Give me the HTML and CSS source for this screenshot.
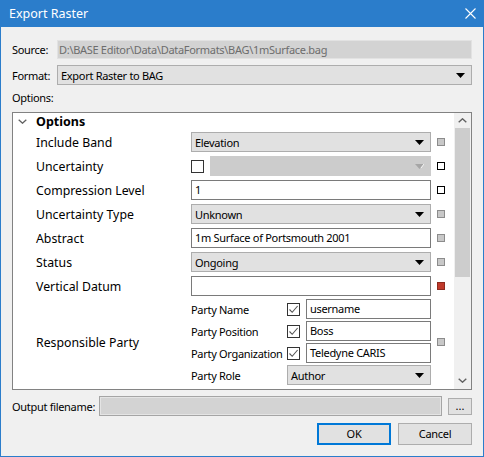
FILE: index.html
```html
<!DOCTYPE html>
<html>
<head>
<meta charset="utf-8">
<link rel="stylesheet" href="styles.css">
</head>
<body>
<div class="window">
  <div class="titlebar">
    <span class="title">Export Raster</span>
    <svg class="close" width="11" height="11" viewBox="0 0 11 11"><path d="M0.5 0.5L10.5 10.5M10.5 0.5L0.5 10.5" stroke="#fff" stroke-width="1.1" fill="none"/></svg>
  </div>
  <div class="content">
    <div class="row src">
      <span class="lbl lbl-src">Source:</span>
      <div class="ro-field">D:\BASE Editor\Data\DataFormats\BAG\1mSurface.bag</div>
    </div>
    <div class="row fmt">
      <span class="lbl lbl-src">Format:</span>
      <div class="combo combo-fmt"><span>Export Raster to BAG</span><svg class="arrow" width="9" height="5" viewBox="0 0 9 5"><path d="M0 0H9L4.5 5Z" fill="#000"/></svg></div>
    </div>
    <div class="opt-label">Options:</div>
    <div class="box">
      <div class="tree">
        <div class="header">
          <svg class="chev" width="9" height="5" viewBox="0 0 9 5"><path d="M0.7 0.7L4.5 4.2L8.3 0.7" stroke="#606060" stroke-width="1.3" fill="none"/></svg>
          <span class="htext">Options</span>
        </div>
        <div class="prow">
          <span class="plabel">Include Band</span>
          <div class="combo editor"><span>Elevation</span><svg class="arrow" width="9" height="5" viewBox="0 0 9 5"><path d="M0 0H9L4.5 5Z" fill="#000"/></svg></div>
          <span class="ind"></span>
        </div>
        <div class="prow">
          <span class="plabel">Uncertainty</span>
          <div class="editor split">
            <span class="cb"></span>
            <div class="combo combo-dis"><svg class="arrow" width="9" height="5" viewBox="0 0 9 5"><path d="M0 0H9L4.5 5Z" fill="#a6a6a6"/><path d="M6 4L9 0" stroke="#f4f4f4" stroke-width="1"/></svg></div>
          </div>
          <span class="ind ind-white"></span>
        </div>
        <div class="prow">
          <span class="plabel">Compression Level</span>
          <div class="text editor">1</div>
          <span class="ind ind-white"></span>
        </div>
        <div class="prow">
          <span class="plabel">Uncertainty Type</span>
          <div class="combo editor"><span>Unknown</span><svg class="arrow" width="9" height="5" viewBox="0 0 9 5"><path d="M0 0H9L4.5 5Z" fill="#000"/></svg></div>
          <span class="ind"></span>
        </div>
        <div class="prow">
          <span class="plabel">Abstract</span>
          <div class="text editor">1m Surface of Portsmouth 2001</div>
          <span class="ind"></span>
        </div>
        <div class="prow">
          <span class="plabel">Status</span>
          <div class="combo editor"><span>Ongoing</span><svg class="arrow" width="9" height="5" viewBox="0 0 9 5"><path d="M0 0H9L4.5 5Z" fill="#000"/></svg></div>
          <span class="ind"></span>
        </div>
        <div class="prow">
          <span class="plabel">Vertical Datum</span>
          <div class="text editor"></div>
          <span class="ind ind-red"></span>
        </div>
        <div class="prow prow-party">
          <span class="plabel">Responsible Party</span>
          <div class="party">
            <div class="sub">
              <span class="slabel">Party Name</span>
              <span class="cb cb-on"><svg width="11" height="11" viewBox="0 0 11 11"><path d="M1.5 5.5L4.2 8.3L9.6 2" stroke="#555" stroke-width="1.1" fill="none"/></svg></span>
              <div class="text sfield">username</div>
            </div>
            <div class="sub">
              <span class="slabel">Party Position</span>
              <span class="cb cb-on"><svg width="11" height="11" viewBox="0 0 11 11"><path d="M1.5 5.5L4.2 8.3L9.6 2" stroke="#555" stroke-width="1.1" fill="none"/></svg></span>
              <div class="text sfield">Boss</div>
            </div>
            <div class="sub">
              <span class="slabel">Party Organization</span>
              <span class="cb cb-on"><svg width="11" height="11" viewBox="0 0 11 11"><path d="M1.5 5.5L4.2 8.3L9.6 2" stroke="#555" stroke-width="1.1" fill="none"/></svg></span>
              <div class="text sfield">Teledyne CARIS</div>
            </div>
            <div class="sub">
              <span class="slabel">Party Role</span>
              <div class="combo role"><span>Author</span><svg class="arrow" width="9" height="5" viewBox="0 0 9 5"><path d="M0 0H9L4.5 5Z" fill="#000"/></svg></div>
            </div>
          </div>
          <span class="ind"></span>
        </div>
      </div>
      <div class="scrollbar">
        <div class="sb-btn sb-up"><svg width="9" height="5" viewBox="0 0 9 5"><path d="M0.7 4.3L4.5 0.8L8.3 4.3" stroke="#606060" stroke-width="1.4" fill="none"/></svg></div>
        <div class="thumb"></div>
        <div class="sb-track"></div>
        <div class="sb-btn sb-down"><svg width="9" height="5" viewBox="0 0 9 5"><path d="M0.7 0.7L4.5 4.2L8.3 0.7" stroke="#606060" stroke-width="1.4" fill="none"/></svg></div>
      </div>
    </div>
    <div class="row out">
      <span class="lbl lbl-out">Output filename:</span>
      <div class="out-field"></div>
      <div class="dots">...</div>
    </div>
    <div class="buttons">
      <div class="btn btn-ok">OK</div>
      <div class="btn">Cancel</div>
    </div>
  </div>
</div>
</body>
</html>
```

FILE: styles.css
```css
* { box-sizing: border-box; }
body {
  margin: 0;
  font-family: "Noto Sans", "Open Sans", sans-serif;
  font-size: 11px;
  letter-spacing: -0.3px;
  color: #000;
}
.window {
  width: 484px;
  height: 457px;
  border: 1px solid #2b7dcb;
  border-top: 0;
  background: #f0f0f0;
  display: flex;
  flex-direction: column;
}
.titlebar {
  height: 27px;
  flex: none;
  background: #2b7dcb;
  color: #fff;
  display: flex;
  align-items: center;
  justify-content: space-between;
  padding: 0 7px 0 8px;
}
.title { font-size: 12.5px; letter-spacing: 0; }
.close { display: block; }
.content {
  padding: 13px 11px 0 11px;
  display: flex;
  flex-direction: column;
}
.row { display: flex; align-items: center; }
.lbl { flex: none; white-space: nowrap; }
.lbl-src { width: 45px; }
.src { height: 19px; }
.ro-field {
  flex: 1;
  height: 19px;
  background: #d3d3d3;
  border: 1px solid #e2e2e2;
  color: #6d6d6d;
  padding-left: 1px;
  line-height: 17px;
  white-space: nowrap;
  overflow: hidden;
}
.fmt { margin-top: 6px; height: 20px; }
.combo {
  height: 20px;
  background: #e1e1e1;
  border: 1px solid #adadad;
  display: flex;
  align-items: center;
  justify-content: space-between;
  padding: 0 6px 0 3px;
  white-space: nowrap;
}
.combo .arrow { display: block; flex: none; margin-left: auto; }
.combo-fmt { flex: 1; }
.opt-label { height: 27px; padding-top: 5px; line-height: 16px; }
.box {
  height: 278px;
  border: 1px solid #828282;
  background: #fff;
  display: flex;
  flex: none;
}
.tree { flex: 1; overflow: hidden; }
.header { height: 17px; display: flex; align-items: center; }
.chev { display: block; margin-left: 5px; margin-right: 9px; }
.htext { font-weight: bold; font-size: 12.5px; letter-spacing: 0; }
.prow { height: 24px; display: flex; align-items: center; }
.plabel { width: 178px; padding-left: 23px; font-size: 12.3px; letter-spacing: 0; flex: none; white-space: nowrap; }
.editor { width: 240px; flex: none; height: 20px; }
.split { display: flex; align-items: center; justify-content: space-between; }
.cb {
  width: 13px;
  height: 13px;
  border: 1px solid #333;
  background: #fff;
  flex: none;
  display: flex;
  align-items: center;
  justify-content: center;
}
.cb svg { display: block; }
.combo-dis { width: 221px; background: #cccccc; border-color: #cccccc; }
.text {
  height: 20px;
  background: #fff;
  border: 1px solid #7a7a7a;
  padding-left: 3px;
  line-height: 18px;
  white-space: nowrap;
  overflow: hidden;
}
.ind {
  width: 8px;
  height: 8px;
  margin-left: 6px;
  border: 1px solid #8c8c8c;
  background: #c8c8c8;
  flex: none;
}
.ind-white { background: #fff; border-color: #000; }
.ind-red { background: #c0392b; border-color: #8e2a1f; }
.prow-party { height: 88px; }
.party { width: 240px; flex: none; display: flex; flex-direction: column; }
.sub { height: 22px; display: flex; align-items: center; }
.slabel { width: 96px; flex: none; white-space: nowrap; }
.sfield { width: 125px; margin-left: 6px; flex: none; }
.role { width: 144px; flex: none; }
.scrollbar {
  width: 17px;
  flex: none;
  background: #f0f0f0;
  display: flex;
  flex-direction: column;
}
.sb-btn { display: flex; align-items: center; justify-content: center; flex: none; }
.sb-btn svg { display: block; }
.sb-up { height: 15px; }
.sb-down { height: 17px; }
.thumb { height: 149px; background: #cdcdcd; margin: 0 1px; flex: none; }
.sb-track { flex: 1; }
.out { margin-top: 6px; height: 20px; }
.lbl-out { width: 87px; }
.out-field {
  width: 343px;
  height: 20px;
  background: #d3d3d3;
  border: 1px solid #a5a5a5;
  box-shadow: inset 0 0 0 1px #e4e4e4;
  flex: none;
}
.dots {
  margin-left: 6px;
  width: 24px;
  height: 17px;
  background: #e1e1e1;
  border: 1px solid #adadad;
  text-align: center;
  line-height: 13px;
  flex: none;
  letter-spacing: 0;
}
.buttons { margin-top: 7px; display: flex; justify-content: flex-end; gap: 7px; }
.btn {
  width: 74px;
  height: 22px;
  background: #e1e1e1;
  border: 1px solid #adadad;
  text-align: center;
  line-height: 20px;
}
.btn-ok { border: 2px solid #0078d7; line-height: 18px; }
```
